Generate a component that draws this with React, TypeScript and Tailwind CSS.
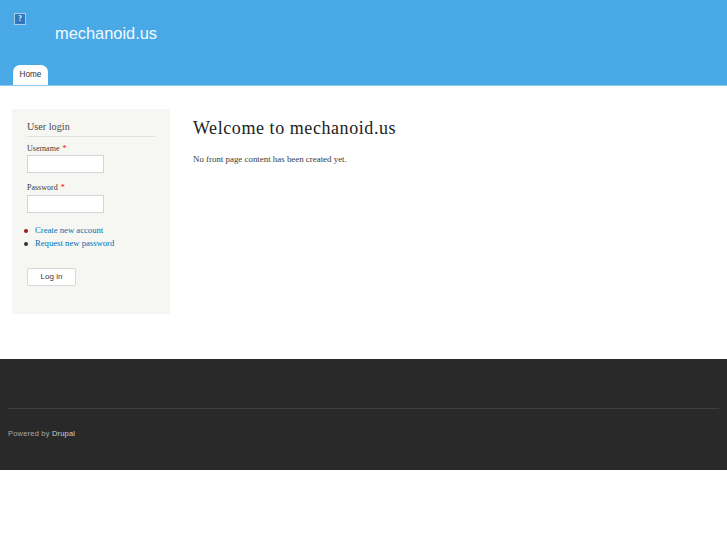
export default function App() {
  return (
    <div className="min-h-[545px] bg-white font-['Liberation_Serif',serif] text-[#3b3b3b]">
      {/* header */}
      <header className="h-[86px] bg-[#48a9e6] flex flex-col justify-between border-b border-[#8cc8ee]">
        <div className="flex items-start pl-[14px] pt-[13px]">
          <div className="w-[12px] h-[12px] border border-[#a9cdea] bg-[#2f78bd] flex items-center justify-center text-[#e8f2fa] text-[8px] leading-none font-bold font-['Liberation_Serif',serif]">
            ?
          </div>
          <div className="ml-[29px] mt-[10px] text-[16.4px] leading-[20px] text-[#f4f9fd] font-['Liberation_Sans',sans-serif]">
            mechanoid.us
          </div>
        </div>
        <nav className="pl-[13px]">
          <a className="block w-[35px] h-[20px] bg-white rounded-t-[7px] text-center text-[8.2px] leading-[19px] text-[#333] font-['Liberation_Sans',sans-serif]">
            Home
          </a>
        </nav>
      </header>

      {/* main */}
      <main className="h-[273px] flex items-start pl-[12px] pt-[23px]">
        <aside className="w-[158px] h-[205px] bg-[#f6f6f2] px-[15px] pt-[11px]">
          <h2 className="text-[10.2px] leading-[14px] text-[#4a4a4a] border-b border-[#e0e0dc] pb-[2px] mb-[6px]">
            User login
          </h2>
          <label className="block text-[8px] leading-[12px] text-[#3b3b3b]">
            Username <span className="text-[#ff0000] ml-[1px]">*</span>
          </label>
          <input className="block w-[77px] h-[18px] bg-white border border-[#d4d4d4]" />
          <label className="block text-[8px] leading-[12px] text-[#3b3b3b] mt-[9px]">
            Password <span className="text-[#ff0000] ml-[1px]">*</span>
          </label>
          <input className="block w-[77px] h-[18px] bg-white border border-[#d4d4d4] mt-[1px]" />
          <ul className="mt-[11px] text-[8.66px] leading-[13px] text-[#0071b3]">
            <li className="flex items-center">
              <span className="w-[4px] h-[4px] rounded-full bg-[#a01818] ml-[-3px] mr-[7px]" />
              <a>Create new account</a>
            </li>
            <li className="flex items-center">
              <span className="w-[4px] h-[4px] rounded-full bg-[#333] ml-[-3px] mr-[7px]" />
              <a>Request new password</a>
            </li>
          </ul>
          <button className="block mt-[18px] w-[49px] h-[18px] bg-white border border-[#d8d8d8] rounded-[2px] text-[8px] text-[#3a3a3a] font-['Liberation_Sans',sans-serif]">
            Log in
          </button>
        </aside>
        <section className="ml-[23px] pt-[9px]">
          <h1 className="text-[18px] leading-[20px] tracking-[0.57px] text-[#222]">Welcome to mechanoid.us</h1>
          <p className="mt-[15px] text-[8.9px] leading-[12px] text-[#3b3b3b]">No front page content has been created yet.</p>
        </section>
      </main>

      {/* footer */}
      <footer className="h-[111px] bg-[#292929] px-[8px] pt-[49px]">
        <div className="border-t border-[#3f3f3f] pt-[19px] text-[7.5px] leading-[12px] tracking-[0.2px] text-[#a8a8a8] font-['Liberation_Sans',sans-serif]">
          Powered by <a className="text-[#d0d0d0]">Drupal</a>
        </div>
      </footer>
    </div>
  );
}
